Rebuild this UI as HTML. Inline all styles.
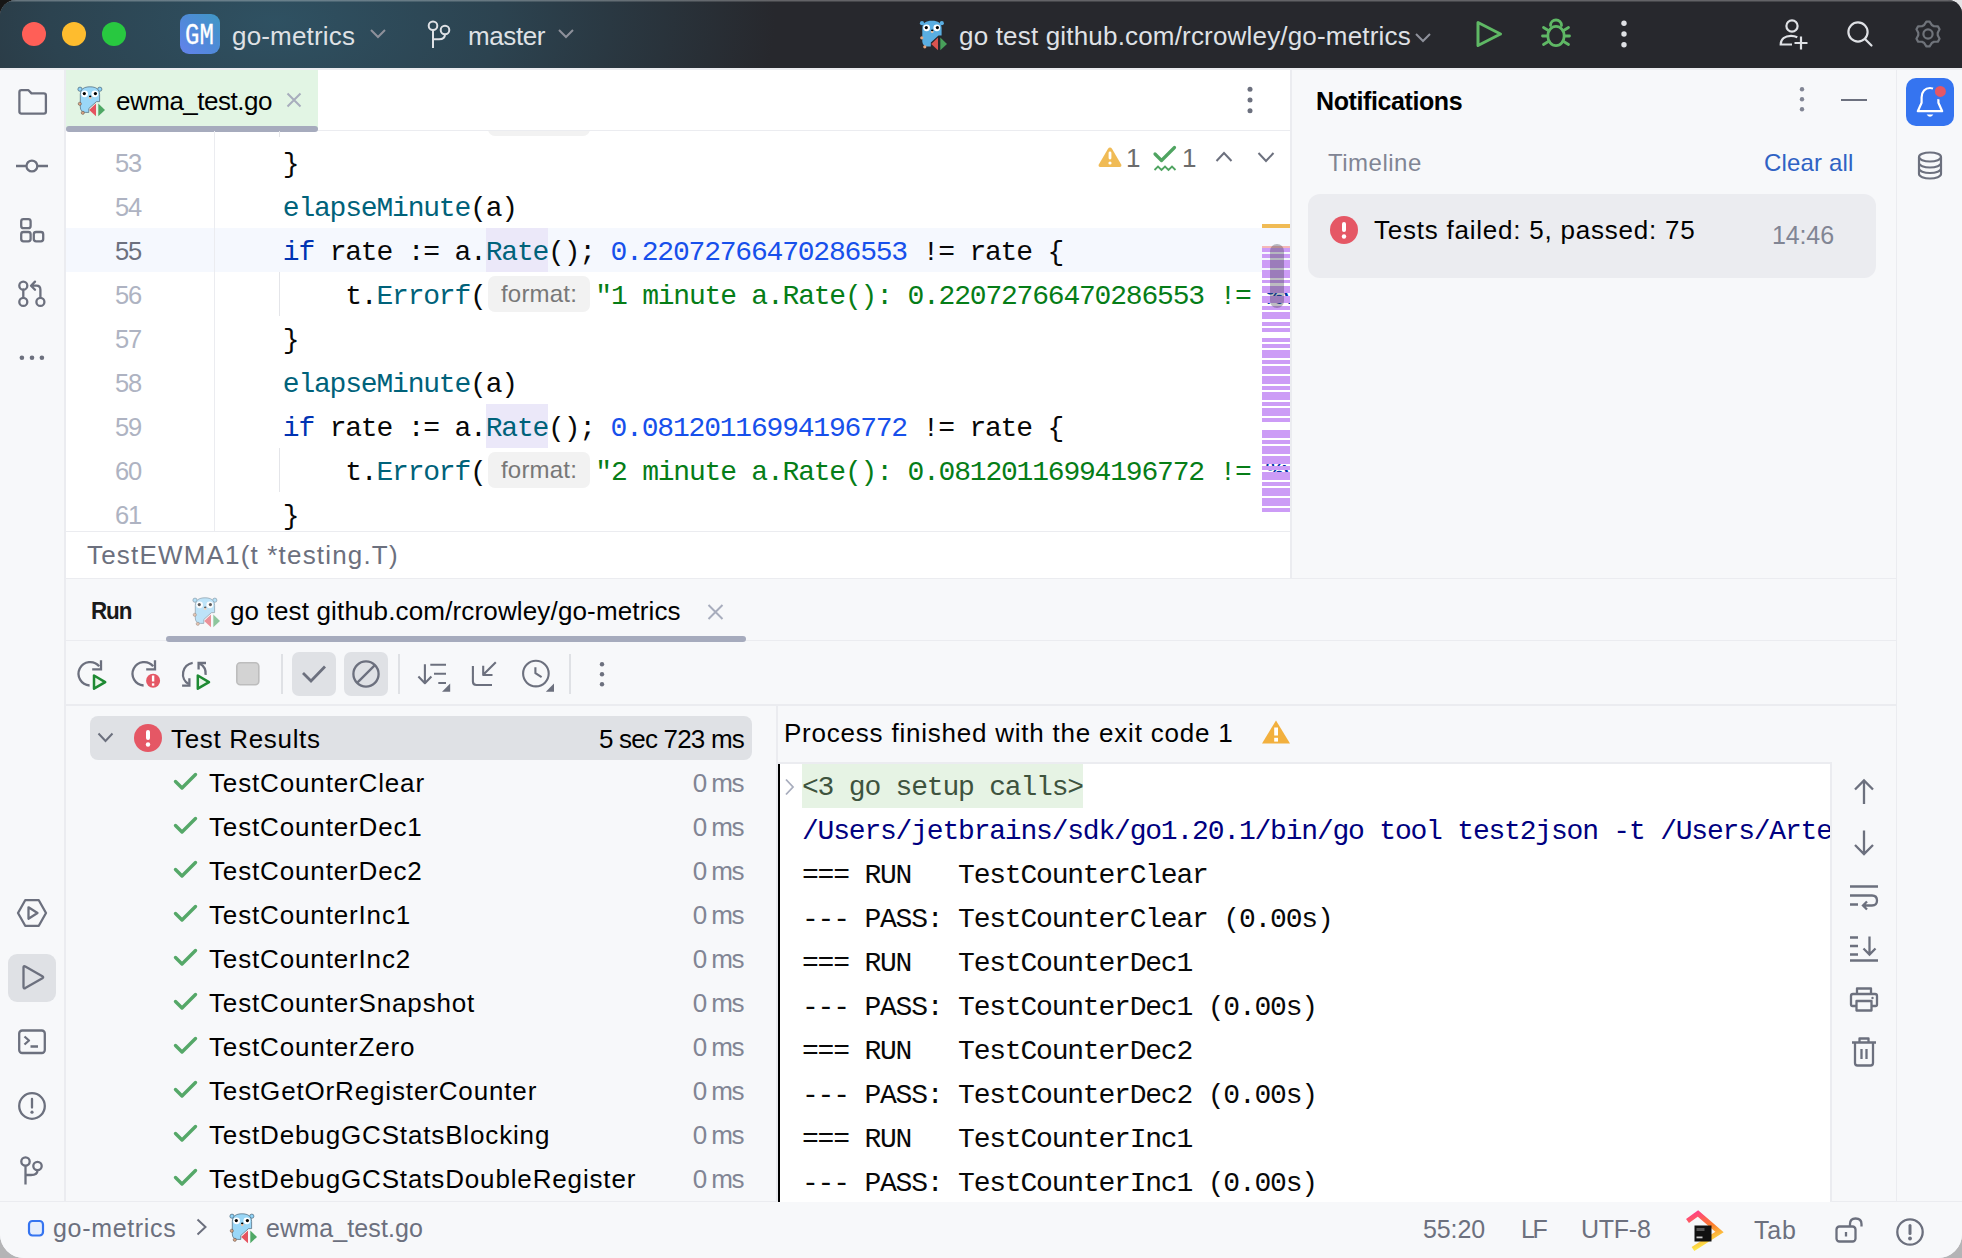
<!DOCTYPE html><html><head><meta charset="utf-8"><style>
*{margin:0;padding:0;box-sizing:border-box}
html,body{width:1962px;height:1258px;overflow:hidden;background:#d0d0d2}
body{font-family:"Liberation Sans",sans-serif;position:relative}
.abs{position:absolute}
.ui{position:absolute;font-family:"Liberation Sans",sans-serif;font-size:26px;letter-spacing:0.7px;white-space:pre;line-height:40px}
.mono{font-family:"Liberation Mono",monospace;font-size:26px;white-space:pre}
#win{position:absolute;left:0;top:0;width:1962px;height:1258px;border-radius:16px 14px 24px 24px;overflow:hidden;background:#f7f8fa}
#title{position:absolute;left:0;top:0;width:1962px;height:68px;
 background:radial-gradient(ellipse 500px 250px at 275px 22px, #2f5162 0%, #2c4350 45%, #27282d 100%), #27282d;box-shadow:inset 0 1.5px 0 rgba(255,255,255,0.28)}
.tl{position:absolute;top:22px;width:24px;height:24px;border-radius:50%}
.wht{color:#dfe1e5}
svg{position:absolute;overflow:visible}
.ln{position:absolute;width:75px;text-align:right;font-family:"Liberation Sans",sans-serif;font-size:25.5px;letter-spacing:-1.2px;color:#aeb3c2;line-height:44px}
.code{position:absolute;font-family:"Liberation Mono",monospace;font-size:28px;letter-spacing:-1.2px;white-space:pre;color:#080808;height:44px;line-height:44px}
.fn{color:#00627a}.kw{color:#0033b3}.num{color:#1750eb}.str{color:#067d17}
.hint{display:inline-block;text-indent:0;background:#f2f2f2;color:#787878;font-family:"Liberation Sans",sans-serif;font-size:24px;border-radius:7px;height:36px;line-height:36px;vertical-align:top;margin:1px 5.6px 0 2.7px;width:101.4px;text-align:center;letter-spacing:0.2px}
.con{position:absolute;font-family:"Liberation Mono",monospace;font-size:28px;letter-spacing:-1.2px;white-space:pre;color:#080808;line-height:44px}
</style></head><body>
<div class="abs" style="left:0;top:0;width:40px;height:40px;background:#161616"></div>
<div class="abs" style="left:1922px;top:0;width:40px;height:40px;background:#e4e4e6"></div>
<div class="abs" style="left:0;top:1218px;width:40px;height:40px;background:#b4b4b6"></div>
<div class="abs" style="left:1922px;top:1218px;width:40px;height:40px;background:#b4b4b6"></div>
<div id="win">
<div id="title">
 <div class="tl" style="left:22px;background:#ff5f57"></div>
 <div class="tl" style="left:62px;background:#febc2e"></div>
 <div class="tl" style="left:102px;background:#28c840"></div>

 <svg width="0" height="0" style="position:absolute">
  <defs>
   <symbol id="gopher" viewBox="0 0 30 32">
    <circle cx="3" cy="4.2" r="2.1" fill="#8ed3f8" stroke="#4d6577" stroke-width="0.7"/>
    <circle cx="22.8" cy="4.2" r="2.1" fill="#8ed3f8" stroke="#4d6577" stroke-width="0.7"/>
    <path d="M3.3 9.5 C3.3 4.2 7 1.8 13 1.8 C19 1.8 22.6 4.2 22.6 9.5 L22.6 16.6 L19.5 16.6 L11.8 23.5 L11.8 27.4 L8.2 27.4 C5 27.4 3.3 25 3.3 22 Z" fill="#9ad7f7" stroke="#4d6577" stroke-width="0.7"/>
    <circle cx="2.8" cy="18.8" r="1.6" fill="#d9a585" stroke="#5a4a40" stroke-width="0.5"/>
    <circle cx="5.8" cy="27.8" r="1.6" fill="#d9a585" stroke="#5a4a40" stroke-width="0.5"/>
    <circle cx="7.6" cy="8.8" r="3.4" fill="#fff"/>
    <circle cx="17.8" cy="8.8" r="3.4" fill="#fff"/>
    <circle cx="7.3" cy="8.6" r="1.6" fill="#000"/>
    <circle cx="18.4" cy="8.6" r="1.6" fill="#000"/>
    <ellipse cx="13.2" cy="12.8" rx="1.5" ry="1.1" fill="#f2c4a4"/>
    <ellipse cx="13.2" cy="11.4" rx="1.2" ry="0.8" fill="#000"/>
    <path d="M12.2 24.9 L19 18.4 L19 31.2 Z" fill="#e5535f"/>
    <path d="M21.3 18.4 L28 24.9 L21.3 31.2 Z" fill="#4fa865"/>
   </symbol>
   <symbol id="gopherD" viewBox="0 0 30 32">
    <circle cx="3" cy="4.2" r="2.1" fill="#5aaee2"/>
    <circle cx="22.8" cy="4.2" r="2.1" fill="#5aaee2"/>
    <path d="M3.3 9.5 C3.3 4.2 7 1.8 13 1.8 C19 1.8 22.6 4.2 22.6 9.5 L22.6 16.6 L19.5 16.6 L11.8 23.5 L11.8 27.4 L8.2 27.4 C5 27.4 3.3 25 3.3 22 Z" fill="#5aaee2"/>
    <circle cx="2.8" cy="18.8" r="1.6" fill="#e3a47e"/>
    <circle cx="5.8" cy="27.8" r="1.6" fill="#e3a47e"/>
    <circle cx="7.6" cy="8.8" r="3.4" fill="#fff"/>
    <circle cx="17.8" cy="8.8" r="3.4" fill="#fff"/>
    <circle cx="7.3" cy="8.6" r="1.6" fill="#000"/>
    <circle cx="18.4" cy="8.6" r="1.6" fill="#000"/>
    <ellipse cx="13.2" cy="12.8" rx="1.5" ry="1.1" fill="#f2c4a4"/>
    <ellipse cx="13.2" cy="11.4" rx="1.2" ry="0.8" fill="#000"/>
    <path d="M12.2 24.9 L19 18.4 L19 31.2 Z" fill="#d9534f"/>
    <path d="M21.3 18.4 L28 24.9 L21.3 31.2 Z" fill="#48a05a"/>
   </symbol>
  </defs>
 </svg>

<div class="abs" style="left:180px;top:14px;width:40px;height:40px;background:linear-gradient(45deg,#6482ec 0%,#4f8ad8 50%,#3f98c4 100%);border-radius:9px"></div>
<div class="abs mono" style="left:185px;top:16px;width:40px;height:40px;line-height:40px;color:#fff;font-size:30px;transform:scaleX(0.8);transform-origin:0 0;letter-spacing:0px;-webkit-text-stroke:0.3px #fff">GM</div>
<div class="ui" style="left:232px;top:16px;color:#dfe1e5;letter-spacing:0.18px;">go-metrics</div>
<svg style="left:370px;top:29px" width="16" height="10"><path d="M1 1 L8.0 8 L15 1" stroke="#8e919b" stroke-width="2" fill="none"/></svg>
<svg style="left:426px;top:19px" width="28" height="32"><circle cx="7" cy="6.7" r="4.3" stroke="#dfe1e5" stroke-width="2" fill="none"/><circle cx="19" cy="11" r="4.3" stroke="#dfe1e5" stroke-width="2" fill="none"/><path d="M7 11 L7 29 M7 20.3 L13 20.3 Q19 20.3 19 15.3" stroke="#dfe1e5" stroke-width="2" fill="none"/></svg>
<div class="ui" style="left:468px;top:16px;color:#dfe1e5;letter-spacing:-0.4px;">master</div>
<svg style="left:558px;top:29px" width="16" height="10"><path d="M1 1 L8.0 8 L15 1" stroke="#8e919b" stroke-width="2" fill="none"/></svg>
<svg style="left:919px;top:19px" width="30" height="32"><use href="#gopherD"/></svg>
<div class="ui" style="left:959px;top:16px;color:#dfe1e5;letter-spacing:0.18px;">go test github.com/rcrowley/go-metrics</div>
<svg style="left:1415px;top:33px" width="16" height="10"><path d="M1 1 L8.0 8 L15 1" stroke="#8e919b" stroke-width="2" fill="none"/></svg>
<svg style="left:1474px;top:19px" width="30" height="30"><path d="M4 3.5 L26.5 15 L4 26.5 Z" stroke="#5fb865" stroke-width="3" fill="none" stroke-linejoin="round"/></svg>
<svg style="left:1538px;top:16px" width="36" height="36"><g stroke="#5fb865" stroke-width="2.8" fill="none" stroke-linecap="round"><path d="M12.5 9.5 A5.5 5.5 0 0 1 23.5 9.5"/><ellipse cx="18" cy="20" rx="8.2" ry="9.6"/><path d="M4.5 20 L9.8 20 M26.2 20 L31.5 20 M5.5 11.5 L10.8 14.8 M30.5 11.5 L25.2 14.8 M5.5 28.5 L10.8 25.2 M30.5 28.5 L25.2 25.2"/></g></svg>
<svg style="left:1614px;top:18px" width="20" height="34"><circle cx="10" cy="5.3" r="2.7" fill="#dfe1e5"/><circle cx="10" cy="16.0" r="2.7" fill="#dfe1e5"/><circle cx="10" cy="26.7" r="2.7" fill="#dfe1e5"/></svg>
<svg style="left:1776px;top:16px" width="32" height="36"><g stroke="#dfe1e5" stroke-width="2.2" fill="none"><circle cx="16" cy="10" r="5.6"/><path d="M16 28.5 L4.7 28.5 C4.7 23 9 19.8 15 19.8 C17.5 19.8 19.5 20.3 21.3 21.2"/><path d="M25 20.5 L25 33.5 M18.5 27 L31.5 27"/></g></svg>
<svg style="left:1844px;top:18px" width="30" height="30"><g stroke="#dfe1e5" stroke-width="2.2" fill="none" stroke-linecap="round"><circle cx="14" cy="14" r="9.6"/><path d="M21 21 L27.5 27.5"/></g></svg>
<svg style="left:1914px;top:20px" width="28" height="28"><g stroke="#6f737a" stroke-width="2.2" fill="none" stroke-linejoin="round"><path d="M12.37 1.61 L15.63 1.61 L17.75 4.95 L19.97 6.23 L23.92 6.39 L25.55 9.22 L23.72 12.72 L23.72 15.28 L25.55 18.78 L23.92 21.61 L19.97 21.77 L17.75 23.05 L15.63 26.39 L12.37 26.39 L10.25 23.05 L8.03 21.77 L4.08 21.61 L2.45 18.78 L4.28 15.28 L4.28 12.72 L2.45 9.22 L4.08 6.39 L8.03 6.23 L10.25 4.95Z"/><circle cx="14" cy="14" r="4.6"/></g></svg>
</div>
<div class="abs" style="left:0px;top:68px;width:1962px;height:2px;background:#ebecf0;"></div>
<div class="abs" style="left:0px;top:70px;width:64px;height:1132px;background:#f7f8fa;"></div>
<div class="abs" style="left:64px;top:70px;width:2px;height:1132px;background:#ebecf0;"></div>
<div class="abs" style="left:66px;top:70px;width:1224px;height:461px;background:#fff;"></div>
<div class="abs" style="left:1290px;top:70px;width:2px;height:509px;background:#ebecf0;"></div>
<div class="abs" style="left:66px;top:70px;width:252px;height:61px;background:#e2f5e4;"></div>
<div class="abs" style="left:66px;top:130px;width:1224px;height:1px;background:#ebecf0;"></div>
<div class="abs" style="left:66px;top:126px;width:252px;height:6px;background:#a6abbd;border-radius:3px"></div>
<svg style="left:77px;top:85px" width="30" height="32"><use href="#gopher"/></svg>
<div class="ui" style="left:116px;top:81px;color:#000;letter-spacing:-0.5px;">ewma_test.go</div>
<svg style="left:286px;top:92px" width="16" height="16"><path d="M1.5 1.5 L14.5 14.5 M14.5 1.5 L1.5 14.5" stroke="#a8adbd" stroke-width="2" fill="none"/></svg>
<svg style="left:1240px;top:84px" width="20" height="34"><circle cx="10" cy="5.3" r="2.5" fill="#6c707e"/><circle cx="10" cy="16.0" r="2.5" fill="#6c707e"/><circle cx="10" cy="26.7" r="2.5" fill="#6c707e"/></svg>
<div class="abs" style="left:66px;top:228px;width:1224px;height:44px;background:#f5f8fe;"></div>
<div class="abs" style="left:485.6px;top:228px;width:62.4px;height:44px;background:#ebe8f9;"></div>
<div class="abs" style="left:485.6px;top:404px;width:62.4px;height:44px;background:#ebe8f9;"></div>
<div class="abs" style="left:214px;top:131px;width:1px;height:400px;background:#ebecf0;"></div>
<div class="abs" style="left:279px;top:131px;width:1px;height:6px;background:#e4e5e9;"></div>
<div class="abs" style="left:279px;top:272px;width:1px;height:44px;background:#e4e5e9;"></div>
<div class="abs" style="left:279px;top:448px;width:1px;height:44px;background:#e4e5e9;"></div>
<div class="abs" style="left:488px;top:106px;width:102px;height:30px;background:#f2f2f2;border-radius:7px;clip-path:inset(25px 0 0 0)"></div>
<div class="abs" style="left:66px;top:131px;width:1224px;height:400px;overflow:hidden">
<div class="ln" style="left:0;top:10px;color:#aeb3c2">53</div>
<div class="code" style="left:154.4px;top:12px">    }</div>
<div class="ln" style="left:0;top:54px;color:#aeb3c2">54</div>
<div class="code" style="left:154.4px;top:56px">    <span class="fn">elapseMinute</span>(a)</div>
<div class="ln" style="left:0;top:98px;color:#6c707e">55</div>
<div class="code" style="left:154.4px;top:100px">    <span class="kw">if</span> rate := a.<span class="fn">Rate</span>(); <span class="num">0.22072766470286553</span> != rate {</div>
<div class="ln" style="left:0;top:142px;color:#aeb3c2">56</div>
<div class="code" style="left:154.4px;top:144px">        t.<span class="fn">Errorf</span>(<span class="hint">format:</span><span class="str">"1 minute a.Rate(): 0.22072766470286553 != <span style="color:#0037a6">%v</span>", rate)</span></div>
<div class="ln" style="left:0;top:186px;color:#aeb3c2">57</div>
<div class="code" style="left:154.4px;top:188px">    }</div>
<div class="ln" style="left:0;top:230px;color:#aeb3c2">58</div>
<div class="code" style="left:154.4px;top:232px">    <span class="fn">elapseMinute</span>(a)</div>
<div class="ln" style="left:0;top:274px;color:#aeb3c2">59</div>
<div class="code" style="left:154.4px;top:276px">    <span class="kw">if</span> rate := a.<span class="fn">Rate</span>(); <span class="num">0.08120116994196772</span> != rate {</div>
<div class="ln" style="left:0;top:318px;color:#aeb3c2">60</div>
<div class="code" style="left:154.4px;top:320px">        t.<span class="fn">Errorf</span>(<span class="hint">format:</span><span class="str">"2 minute a.Rate(): 0.08120116994196772 != <span style="color:#0037a6">%v</span>", rate)</span></div>
<div class="ln" style="left:0;top:362px;color:#aeb3c2">61</div>
<div class="code" style="left:154.4px;top:364px">    }</div>
</div>
<div class="abs" style="left:1262px;top:224px;width:28px;height:4px;background:#f0bb55;"></div>
<div class="abs" style="left:1262px;top:246px;width:28px;height:2px;background:#f5b8b8;"></div>
<div class="abs" style="left:1262px;top:248px;width:28px;height:3.6px;background:#cc9cf6;"></div>
<div class="abs" style="left:1262px;top:254px;width:28px;height:4px;background:#cc9cf6;"></div>
<div class="abs" style="left:1262px;top:260px;width:28px;height:8px;background:#cc9cf6;"></div>
<div class="abs" style="left:1262px;top:270px;width:28px;height:8px;background:#cc9cf6;"></div>
<div class="abs" style="left:1262px;top:280px;width:28px;height:3px;background:#cc9cf6;"></div>
<div class="abs" style="left:1262px;top:285.6px;width:28px;height:7.9px;background:#cc9cf6;"></div>
<div class="abs" style="left:1262px;top:295.7px;width:28px;height:7.8px;background:#cc9cf6;"></div>
<div class="abs" style="left:1262px;top:306px;width:28px;height:3.5px;background:#cc9cf6;"></div>
<div class="abs" style="left:1262px;top:311.7px;width:28px;height:7.8px;background:#cc9cf6;"></div>
<div class="abs" style="left:1262px;top:322px;width:28px;height:3.7px;background:#cc9cf6;"></div>
<div class="abs" style="left:1262px;top:328px;width:28px;height:3.8px;background:#cc9cf6;"></div>
<div class="abs" style="left:1262px;top:338px;width:28px;height:3.8px;background:#cc9cf6;"></div>
<div class="abs" style="left:1262px;top:344px;width:28px;height:4px;background:#cc9cf6;"></div>
<div class="abs" style="left:1262px;top:350px;width:28px;height:8px;background:#cc9cf6;"></div>
<div class="abs" style="left:1262px;top:360px;width:28px;height:4px;background:#cc9cf6;"></div>
<div class="abs" style="left:1262px;top:366px;width:28px;height:8px;background:#cc9cf6;"></div>
<div class="abs" style="left:1262px;top:376px;width:28px;height:8px;background:#cc9cf6;"></div>
<div class="abs" style="left:1262px;top:386px;width:28px;height:3.7px;background:#cc9cf6;"></div>
<div class="abs" style="left:1262px;top:392px;width:28px;height:8px;background:#cc9cf6;"></div>
<div class="abs" style="left:1262px;top:402px;width:28px;height:4px;background:#cc9cf6;"></div>
<div class="abs" style="left:1262px;top:408px;width:28px;height:8px;background:#cc9cf6;"></div>
<div class="abs" style="left:1262px;top:418px;width:28px;height:4px;background:#cc9cf6;"></div>
<div class="abs" style="left:1262px;top:430px;width:28px;height:7.8px;background:#cc9cf6;"></div>
<div class="abs" style="left:1262px;top:440px;width:28px;height:3.8px;background:#cc9cf6;"></div>
<div class="abs" style="left:1262px;top:446px;width:28px;height:7.8px;background:#cc9cf6;"></div>
<div class="abs" style="left:1262px;top:456px;width:28px;height:7.8px;background:#cc9cf6;"></div>
<div class="abs" style="left:1262px;top:466px;width:28px;height:4px;background:#cc9cf6;"></div>
<div class="abs" style="left:1262px;top:472px;width:28px;height:8px;background:#cc9cf6;"></div>
<div class="abs" style="left:1262px;top:482px;width:28px;height:4px;background:#cc9cf6;"></div>
<div class="abs" style="left:1262px;top:488px;width:28px;height:8px;background:#cc9cf6;"></div>
<div class="abs" style="left:1262px;top:498px;width:28px;height:8px;background:#cc9cf6;"></div>
<div class="abs" style="left:1262px;top:508px;width:28px;height:4px;background:#cc9cf6;"></div>
<div class="abs" style="left:1270px;top:244px;width:14px;height:64px;background:rgba(70,70,80,0.36);border-radius:7px"></div>
<svg style="left:1097px;top:145px" width="26" height="24"><path d="M13 2.5 Q14.2 2.5 15 3.8 L24.2 19.5 Q25 21.5 22.8 22 L3.2 22 Q1 21.5 1.8 19.5 L11 3.8 Q11.8 2.5 13 2.5Z" fill="#f0bb55"/><rect x="11.6" y="6.5" width="2.8" height="8" rx="1.4" fill="#fff"/><circle cx="13" cy="18" r="1.6" fill="#fff"/></svg>
<div class="ui" style="left:1126px;top:138px;color:#6c6c6c;letter-spacing:0px;">1</div>
<svg style="left:1152px;top:145px" width="28" height="30"><path d="M3 9 L9.5 15.5 L22.5 2.5" stroke="#4fa461" stroke-width="3.2" fill="none" stroke-linecap="round" stroke-linejoin="round"/><path d="M2.5 25 L6 21.5 L9.5 25 L13 21.5 L16.5 25 L20 21.5 L23.5 25" stroke="#4fa461" stroke-width="1.8" fill="none"/></svg>
<div class="ui" style="left:1182px;top:138px;color:#6c6c6c;letter-spacing:0px;">1</div>
<svg style="left:1215px;top:151px" width="18" height="12"><path d="M1.5 10 L9 2 L16.5 10" stroke="#6c707e" stroke-width="2" fill="none"/></svg>
<svg style="left:1257px;top:151px" width="18" height="12"><path d="M1.5 2 L9 10 L16.5 2" stroke="#6c707e" stroke-width="2" fill="none"/></svg>
<div class="abs" style="left:66px;top:531px;width:1224px;height:1px;background:#ebecf0;"></div>
<div class="abs" style="left:66px;top:532px;width:1224px;height:46px;background:#fff;"></div>
<div class="ui" style="left:87px;top:535px;color:#6c707e;letter-spacing:1.18px;">TestEWMA1(t *testing.T)</div>
<div class="abs" style="left:1292px;top:70px;width:604px;height:509px;background:#f7f8fa;"></div>
<div class="ui" style="left:1316px;top:81px;color:#000;letter-spacing:-0.4px;font-size:25px;font-weight:bold">Notifications</div>
<svg style="left:1792px;top:84px" width="20" height="34"><circle cx="10" cy="5.3" r="2.2" fill="#818594"/><circle cx="10" cy="15.3" r="2.2" fill="#818594"/><circle cx="10" cy="25.3" r="2.2" fill="#818594"/></svg>
<div class="abs" style="left:1841px;top:99px;width:26px;height:2px;background:#6c707e;"></div>
<div class="ui" style="left:1328px;top:143px;color:#818594;letter-spacing:0.49px;font-size:24px;">Timeline</div>
<div class="ui" style="left:1764px;top:143px;color:#2f62c4;letter-spacing:0.16px;font-size:24px;">Clear all</div>
<div class="abs" style="left:1308px;top:194px;width:568px;height:84px;background:#ebecf0;border-radius:12px"></div>
<svg style="left:1330px;top:216px" width="28" height="28"><circle cx="14" cy="14" r="14" fill="#e55765"/><rect x="12" y="6" width="4" height="10" rx="2" fill="#fff"/><circle cx="14" cy="20.5" r="2.2" fill="#fff"/></svg>
<div class="ui" style="left:1374px;top:210px;color:#000;letter-spacing:0.77px;">Tests failed: 5, passed: 75</div>
<div class="ui" style="left:1772px;top:215px;color:#818594;letter-spacing:-0.13px;font-size:25px;">14:46</div>
<div class="abs" style="left:1896px;top:70px;width:1px;height:1132px;background:#ebecf0;"></div>
<div class="abs" style="left:1897px;top:70px;width:65px;height:1132px;background:#f7f8fa;"></div>
<div class="abs" style="left:1906px;top:78px;width:48px;height:48px;background:#3574f0;border-radius:10px"></div>
<svg style="left:1906px;top:78px" width="48" height="48"><path d="M11.8 33.2 L15.6 24.8 L15.6 19.5 C15.6 13.6 19.2 10 24 10 C28.8 10 32.4 13.6 32.4 19.5 L32.4 24.8 L36.2 33.2 Z" stroke="#fff" stroke-width="2.2" fill="none" stroke-linejoin="round"/><path d="M20.6 36.6 L27.4 36.6 Q24 41 20.6 36.6Z" fill="#fff"/><circle cx="34.4" cy="13.4" r="6.8" fill="#e55765" stroke="#3574f0" stroke-width="2.6"/></svg>
<svg style="left:1917px;top:151px" width="26" height="30"><g stroke="#6c707e" stroke-width="2.2" fill="none"><ellipse cx="13" cy="6" rx="11" ry="4.5"/><path d="M2 6 L2 23 C2 25.5 7 27.5 13 27.5 C19 27.5 24 25.5 24 23 L24 6 M2 12 C2 14.5 7 16.5 13 16.5 C19 16.5 24 14.5 24 12 M2 17.5 C2 20 7 22 13 22 C19 22 24 20 24 17.5"/></g></svg>
<div class="abs" style="left:66px;top:578px;width:1830px;height:1px;background:#ebecf0;"></div>
<div class="abs" style="left:66px;top:579px;width:1830px;height:623px;background:#f7f8fa;"></div>
<div class="abs" style="left:0px;top:1201px;width:1962px;height:1px;background:#ebecf0;"></div>
<div class="abs" style="left:0px;top:1202px;width:1962px;height:56px;background:#f7f8fa;"></div>
<svg style="left:16px;top:88px" width="32" height="28"><path d="M3.4 4.2 Q3.4 2.2 5.4 2.2 L12.5 2.2 L15.5 5.4 L27.8 5.4 Q29.9 5.4 29.9 7.4 L29.9 23.7 Q29.9 25.6 27.9 25.6 L5.4 25.6 Q3.4 25.6 3.4 23.6 Z" stroke="#6c707e" stroke-width="2.3" fill="none" stroke-linejoin="round"/></svg>
<svg style="left:15px;top:158px" width="34" height="16"><path d="M1 8 L11 8 M22 8 L33 8" stroke="#6c707e" stroke-width="2.3"/><circle cx="16.9" cy="8" r="5.4" stroke="#6c707e" stroke-width="2.3" fill="none"/></svg>
<svg style="left:18px;top:216px" width="28" height="28"><g stroke="#6c707e" stroke-width="2.3" fill="none"><rect x="3.2" y="3.2" width="9.4" height="9" rx="2.3"/><rect x="3.2" y="16" width="9.4" height="9.4" rx="2.3"/><rect x="15.8" y="16" width="9.4" height="9.4" rx="2.3"/></g></svg>
<svg style="left:15px;top:278px" width="34" height="30"><g stroke="#6c707e" stroke-width="2.3" fill="none"><circle cx="8.3" cy="7.7" r="4"/><circle cx="8.3" cy="23.9" r="4"/><circle cx="25.4" cy="23.9" r="4"/><path d="M8.3 11.7 L8.3 19.9 M25.4 19.9 L25.4 11.7 Q25.4 7.7 21.4 7.7 L16.3 7.7 M20 3.6 L16 7.7 L20 11.7" stroke-linejoin="round" stroke-linecap="round"/></g></svg>
<svg style="left:15px;top:350px" width="34" height="16"><circle cx="6.9" cy="7.8" r="2.3" fill="#6c707e"/><circle cx="17" cy="7.8" r="2.3" fill="#6c707e"/><circle cx="26.9" cy="7.8" r="2.3" fill="#6c707e"/></svg>
<svg style="left:16px;top:897px" width="32" height="32"><g stroke="#6c707e" stroke-width="2.3" fill="none" stroke-linejoin="round"><path d="M9.2 3.2 L22.8 3.2 L30 16 L22.8 28.8 L9.2 28.8 L2 16 Z"/><path d="M12.5 10.3 L21.5 16 L12.5 21.7 Z"/></g></svg>
<div class="abs" style="left:8px;top:954px;width:48px;height:48px;background:#dfe1e5;border-radius:9px"></div>
<svg style="left:16px;top:962px" width="32" height="32"><path d="M7.5 5.5 Q7.5 3.6 9.3 4.5 L26.4 14.3 Q28 15.3 26.4 16.3 L9.3 26.1 Q7.5 27 7.5 25.1 Z" stroke="#6c707e" stroke-width="2.3" fill="none" stroke-linejoin="round"/></svg>
<svg style="left:16px;top:1027px" width="32" height="30"><g stroke="#6c707e" stroke-width="2.3" fill="none" stroke-linejoin="round"><rect x="3.2" y="3.5" width="25.6" height="22.5" rx="3"/><path d="M8.5 9.5 L13 13.5 L8.5 17.5 M14.5 19.5 L22 19.5"/></g></svg>
<svg style="left:16px;top:1090px" width="32" height="32"><g stroke="#6c707e" stroke-width="2.3" fill="none"><circle cx="16" cy="16" r="12.8"/><path d="M16 9 L16 17.5" stroke-linecap="round"/></g><circle cx="16" cy="22.2" r="1.6" fill="#6c707e"/></svg>
<svg style="left:16px;top:1155px" width="32" height="32"><g stroke="#6c707e" stroke-width="2.3" fill="none"><circle cx="9.5" cy="6.5" r="4.2"/><circle cx="21.5" cy="11" r="4.2"/><path d="M9.5 10.7 L9.5 29.5 M9.5 20 L15 20 Q21.5 20 21.5 15.2"/></g></svg>
<div class="ui" style="left:91px;top:591px;color:#1a1a1a;letter-spacing:-1.2px;font-size:24.4px;font-weight:bold;transform:scaleX(0.92);transform-origin:0 0">Run</div>
<svg style="left:192px;top:596px" width="30" height="32"><g opacity="0.62"><use href="#gopher"/></g></svg>
<div class="ui" style="left:230px;top:591px;color:#000;letter-spacing:0.15px;">go test github.com/rcrowley/go-metrics</div>
<svg style="left:707px;top:604px" width="18" height="16"><path d="M1.5 1 L15.5 15 M15.5 1 L1.5 15" stroke="#a8adbd" stroke-width="2" fill="none"/></svg>
<div class="abs" style="left:66px;top:640px;width:1830px;height:1px;background:#ebecf0;"></div>
<div class="abs" style="left:166px;top:636px;width:580px;height:6px;background:#a6abbd;border-radius:3px"></div>
<svg style="left:72px;top:654px" width="144" height="44"><g fill="none" stroke-width="2.3" stroke="#6c707e">
<path d="M99.2 666.3 A11.7 11.7 0 1 0 89.6 685.5" transform="translate(-72,-654)"/>
<path d="M101 660.2 L101 669.4 L92.2 669.4" transform="translate(-72,-654)"/>
<path d="M153.2 666.3 A11.7 11.7 0 1 0 143.6 685.5" transform="translate(-72,-654)"/>
<path d="M155 660.2 L155 669.4 L146.2 669.4" transform="translate(-72,-654)"/>
<path d="M192.7 662.8 A11.5 11.5 0 0 0 188.7 684.1" transform="translate(-72,-654)"/>
<path d="M189.4 678.2 L189.4 685.6 L182.1 685.6" transform="translate(-72,-654)"/>
<path d="M205.6 674.9 A11.5 11.5 0 0 0 199.5 663.6" transform="translate(-72,-654)"/>
<path d="M198.6 669.5 L198.6 663 L206 663" transform="translate(-72,-654)"/>
</g>
<g transform="translate(-72,-654)" stroke="#1e8a33" stroke-width="2.5" fill="#eaf6ea" stroke-linejoin="round">
<path d="M94 675.5 L94 688.7 L105.2 682.1 Z"/>
<path d="M197.8 675.5 L197.8 688.7 L209 682.1 Z"/>
</g>
<g transform="translate(-72,-654)"><circle cx="153.1" cy="680.8" r="7" fill="#e55765"/><rect x="151.9" y="675.5" width="2.4" height="6" fill="#fff"/><rect x="151.9" y="683.3" width="2.4" height="2.4" fill="#fff"/></g></svg>
<svg style="left:235px;top:661px" width="26" height="26"><rect x="1.8" y="1.8" width="22" height="22" rx="3.5" fill="#d3d3d3" stroke="#bdbdbd" stroke-width="1.6"/></svg>
<div class="abs" style="left:281px;top:654px;width:1.5px;height:40px;background:#dfe1e5;"></div>
<div class="abs" style="left:292px;top:652px;width:44px;height:44px;background:#dfe1e5;border-radius:7px"></div>
<svg style="left:300px;top:662px" width="28" height="24"><path d="M3 11 L11 19 L25 4.5" stroke="#6c707e" stroke-width="2.8" fill="none"/></svg>
<div class="abs" style="left:344px;top:652px;width:44px;height:44px;background:#dfe1e5;border-radius:7px"></div>
<svg style="left:352px;top:660px" width="28" height="28"><g stroke="#6c707e" stroke-width="2.3" fill="none"><circle cx="14" cy="14" r="12.6"/><path d="M22.9 5.1 L5.1 22.9"/></g></svg>
<div class="abs" style="left:398px;top:654px;width:1.5px;height:40px;background:#dfe1e5;"></div>
<svg style="left:405px;top:650px" width="160" height="50"><g transform="translate(-405,-650)"><g stroke="#6c707e" stroke-width="2.1" fill="none" stroke-linejoin="round" stroke-linecap="butt">
<path d="M424.9 664.2 L424.9 683 M418.4 676.6 L424.9 683.2 L431.4 676.6 M430.3 664.8 L446 664.8 M434 673.8 L446 673.8 M438.3 683 L446 683"/>
<path d="M472.9 666 L472.9 681.5 Q472.9 685 476.4 685 L492 685 M495.8 662.2 L483.2 674.8 M483.2 665.8 L483.2 675 L492.5 675"/>
<circle cx="535.9" cy="673.6" r="12.8"/>
<path d="M535.4 667.3 L535.4 673.2 L541.6 677.2"/>
</g>
<path d="M442 691.8 L450.2 691.8 L450.2 683.6 Z" fill="#6c707e"/>
<path d="M545.8 691.8 L554 691.8 L554 683.6 Z" fill="#6c707e"/>
</g></svg>
<div class="abs" style="left:569px;top:654px;width:1.5px;height:40px;background:#dfe1e5;"></div>
<svg style="left:592px;top:658.7px" width="20" height="34"><circle cx="10" cy="5.3" r="2.2" fill="#6c707e"/><circle cx="10" cy="15.3" r="2.2" fill="#6c707e"/><circle cx="10" cy="25.3" r="2.2" fill="#6c707e"/></svg>
<div class="abs" style="left:66px;top:704px;width:1830px;height:2px;background:#ebecf0;"></div>
<div class="abs" style="left:776px;top:706px;width:2px;height:496px;background:#ebecf0;"></div>
<div class="abs" style="left:90px;top:716px;width:662px;height:44px;background:#dfe1e5;border-radius:8px"></div>
<svg style="left:97px;top:732px" width="18" height="12"><path d="M1.5 1.5 L8.5 9 L15.5 1.5" stroke="#6c707e" stroke-width="2" fill="none"/></svg>
<svg style="left:134px;top:724px" width="28" height="28"><circle cx="14" cy="14" r="14" fill="#e55765"/><rect x="12" y="6" width="4" height="10" rx="2" fill="#fff"/><circle cx="14" cy="20.5" r="2.2" fill="#fff"/></svg>
<div class="ui" style="left:171px;top:719px;color:#000;letter-spacing:0.67px;">Test Results</div>
<div class="ui" style="left:544px;top:719px;color:#000;letter-spacing:-0.8px;width:200px;text-align:right;">5 sec 723 ms</div>
<div class="abs" style="left:66px;top:707px;width:710px;height:495px;overflow:hidden">
<svg style="left:107px;top:64px" width="26" height="22"><path d="M2.5 10.5 L9 17 L22.5 3.5" stroke="#55a868" stroke-width="3.4" fill="none" stroke-linecap="round" stroke-linejoin="round"/></svg>
<div class="ui" style="left:143px;top:56px;color:#000;letter-spacing:0.85px">TestCounterClear</div>
<div class="ui" style="left:577px;top:56px;color:#818594;letter-spacing:-1.5px;width:100px;text-align:right">0 ms</div>
<svg style="left:107px;top:108px" width="26" height="22"><path d="M2.5 10.5 L9 17 L22.5 3.5" stroke="#55a868" stroke-width="3.4" fill="none" stroke-linecap="round" stroke-linejoin="round"/></svg>
<div class="ui" style="left:143px;top:100px;color:#000;letter-spacing:0.85px">TestCounterDec1</div>
<div class="ui" style="left:577px;top:100px;color:#818594;letter-spacing:-1.5px;width:100px;text-align:right">0 ms</div>
<svg style="left:107px;top:152px" width="26" height="22"><path d="M2.5 10.5 L9 17 L22.5 3.5" stroke="#55a868" stroke-width="3.4" fill="none" stroke-linecap="round" stroke-linejoin="round"/></svg>
<div class="ui" style="left:143px;top:144px;color:#000;letter-spacing:0.85px">TestCounterDec2</div>
<div class="ui" style="left:577px;top:144px;color:#818594;letter-spacing:-1.5px;width:100px;text-align:right">0 ms</div>
<svg style="left:107px;top:196px" width="26" height="22"><path d="M2.5 10.5 L9 17 L22.5 3.5" stroke="#55a868" stroke-width="3.4" fill="none" stroke-linecap="round" stroke-linejoin="round"/></svg>
<div class="ui" style="left:143px;top:188px;color:#000;letter-spacing:0.85px">TestCounterInc1</div>
<div class="ui" style="left:577px;top:188px;color:#818594;letter-spacing:-1.5px;width:100px;text-align:right">0 ms</div>
<svg style="left:107px;top:240px" width="26" height="22"><path d="M2.5 10.5 L9 17 L22.5 3.5" stroke="#55a868" stroke-width="3.4" fill="none" stroke-linecap="round" stroke-linejoin="round"/></svg>
<div class="ui" style="left:143px;top:232px;color:#000;letter-spacing:0.85px">TestCounterInc2</div>
<div class="ui" style="left:577px;top:232px;color:#818594;letter-spacing:-1.5px;width:100px;text-align:right">0 ms</div>
<svg style="left:107px;top:284px" width="26" height="22"><path d="M2.5 10.5 L9 17 L22.5 3.5" stroke="#55a868" stroke-width="3.4" fill="none" stroke-linecap="round" stroke-linejoin="round"/></svg>
<div class="ui" style="left:143px;top:276px;color:#000;letter-spacing:0.85px">TestCounterSnapshot</div>
<div class="ui" style="left:577px;top:276px;color:#818594;letter-spacing:-1.5px;width:100px;text-align:right">0 ms</div>
<svg style="left:107px;top:328px" width="26" height="22"><path d="M2.5 10.5 L9 17 L22.5 3.5" stroke="#55a868" stroke-width="3.4" fill="none" stroke-linecap="round" stroke-linejoin="round"/></svg>
<div class="ui" style="left:143px;top:320px;color:#000;letter-spacing:0.85px">TestCounterZero</div>
<div class="ui" style="left:577px;top:320px;color:#818594;letter-spacing:-1.5px;width:100px;text-align:right">0 ms</div>
<svg style="left:107px;top:372px" width="26" height="22"><path d="M2.5 10.5 L9 17 L22.5 3.5" stroke="#55a868" stroke-width="3.4" fill="none" stroke-linecap="round" stroke-linejoin="round"/></svg>
<div class="ui" style="left:143px;top:364px;color:#000;letter-spacing:0.85px">TestGetOrRegisterCounter</div>
<div class="ui" style="left:577px;top:364px;color:#818594;letter-spacing:-1.5px;width:100px;text-align:right">0 ms</div>
<svg style="left:107px;top:416px" width="26" height="22"><path d="M2.5 10.5 L9 17 L22.5 3.5" stroke="#55a868" stroke-width="3.4" fill="none" stroke-linecap="round" stroke-linejoin="round"/></svg>
<div class="ui" style="left:143px;top:408px;color:#000;letter-spacing:0.85px">TestDebugGCStatsBlocking</div>
<div class="ui" style="left:577px;top:408px;color:#818594;letter-spacing:-1.5px;width:100px;text-align:right">0 ms</div>
<svg style="left:107px;top:460px" width="26" height="22"><path d="M2.5 10.5 L9 17 L22.5 3.5" stroke="#55a868" stroke-width="3.4" fill="none" stroke-linecap="round" stroke-linejoin="round"/></svg>
<div class="ui" style="left:143px;top:452px;color:#000;letter-spacing:0.85px">TestDebugGCStatsDoubleRegister</div>
<div class="ui" style="left:577px;top:452px;color:#818594;letter-spacing:-1.5px;width:100px;text-align:right">0 ms</div>
</div>
<div class="ui" style="left:784px;top:713px;color:#000;letter-spacing:0.78px;">Process finished with the exit code 1</div>
<svg style="left:1262px;top:720px" width="28" height="24"><path d="M14 0.5 L28 23.5 L0 23.5 Z" fill="#f2b03e"/><rect x="12.2" y="7.5" width="3.8" height="8" fill="#fff"/><rect x="12.2" y="17.8" width="3.8" height="3.8" fill="#fff"/></svg>
<div class="abs" style="left:778px;top:762px;width:1054px;height:2px;background:#ebecf0;"></div>
<div class="abs" style="left:778px;top:764px;width:1052px;height:438px;background:#fff;"></div>
<div class="abs" style="left:1830px;top:764px;width:2px;height:438px;background:#ebecf0;"></div>
<div class="abs" style="left:778px;top:764px;width:2px;height:438px;background:#000;"></div>
<svg style="left:784px;top:778px" width="12" height="18"><path d="M2 1.5 L9 9 L2 16.5" stroke="#a8adbd" stroke-width="1.8" fill="none"/></svg>
<div class="abs" style="left:802px;top:764px;width:281px;height:44px;background:#e6f3e4;"></div>
<div class="abs" style="left:780px;top:764px;width:1050px;height:438px;overflow:hidden">
<div class="con" style="left:22px;top:2px"><span style="color:#3e533e">&lt;3 go setup calls&gt;</span></div>
<div class="con" style="left:22px;top:46px"><span style="color:#000080">/Users/jetbrains/sdk/go1.20.1/bin/go tool test2json -t /Users/Arte</span></div>
<div class="con" style="left:22px;top:90px">=== RUN   TestCounterClear</div>
<div class="con" style="left:22px;top:134px">--- PASS: TestCounterClear (0.00s)</div>
<div class="con" style="left:22px;top:178px">=== RUN   TestCounterDec1</div>
<div class="con" style="left:22px;top:222px">--- PASS: TestCounterDec1 (0.00s)</div>
<div class="con" style="left:22px;top:266px">=== RUN   TestCounterDec2</div>
<div class="con" style="left:22px;top:310px">--- PASS: TestCounterDec2 (0.00s)</div>
<div class="con" style="left:22px;top:354px">=== RUN   TestCounterInc1</div>
<div class="con" style="left:22px;top:398px">--- PASS: TestCounterInc1 (0.00s)</div>
</div>
<svg style="left:1852px;top:778px" width="24" height="28"><path d="M12 2.5 L12 26 M3 11.5 L12 2.5 L21 11.5" stroke="#6c707e" stroke-width="2.3" fill="none"/></svg>
<svg style="left:1852px;top:829px" width="24" height="28"><path d="M12 1.5 L12 25 M3 16 L12 25 L21 16" stroke="#6c707e" stroke-width="2.3" fill="none"/></svg>
<svg style="left:1848px;top:883px" width="32" height="30"><g stroke="#6c707e" stroke-width="2.3" fill="none"><path d="M2 3.5 L30 3.5 M2 12.5 L24 12.5 Q29 12.5 29 17.5 Q29 22.5 24 22.5 L15 22.5 M19 18.5 L15 22.5 L19 26.5 M2 21.5 L10 21.5"/></g></svg>
<svg style="left:1848px;top:934px" width="32" height="28"><g stroke="#6c707e" stroke-width="2.3" fill="none"><path d="M2 3.5 L10 3.5 M2 12 L10 12 M2 20.5 L10 20.5 M2 26.5 L30 26.5 M21.5 2.5 L21.5 20.5 M15.5 14.5 L21.5 20.5 L27.5 14.5"/></g></svg>
<svg style="left:1849px;top:986px" width="30" height="28"><g stroke="#6c707e" stroke-width="2.3" fill="none" stroke-linejoin="round"><path d="M8 8 L8 2.5 L22 2.5 L22 8"/><path d="M7 20 L3.5 20 Q2 20 2 18.5 L2 10 Q2 8 4 8 L26 8 Q28 8 28 10 L28 18.5 Q28 20 26.5 20 L23 20"/><rect x="7.5" y="15" width="15" height="9.5"/></g><circle cx="23.5" cy="12" r="1.2" fill="#6c707e"/></svg>
<svg style="left:1850px;top:1036px" width="28" height="32"><g stroke="#6c707e" stroke-width="2.3" fill="none" stroke-linejoin="round"><path d="M2 6.5 L26 6.5 M9.5 6.5 L9.5 2.5 L18.5 2.5 L18.5 6.5 M5 6.5 L5 27 Q5 29.5 7.5 29.5 L20.5 29.5 Q23 29.5 23 27 L23 6.5 M11.5 13 L11.5 23 M16.5 13 L16.5 23"/></g></svg>
<svg style="left:27px;top:1219px" width="18" height="18"><rect x="2" y="2" width="14" height="14.5" rx="3.5" fill="#e6eefc" stroke="#3574f0" stroke-width="2.2"/></svg>
<div class="ui" style="left:53px;top:1208px;color:#6c707e;letter-spacing:0.67px;font-size:25px;">go-metrics</div>
<svg style="left:195px;top:1218px" width="14" height="18"><path d="M2.5 1.5 L10.5 9 L2.5 16.5" stroke="#6c707e" stroke-width="2" fill="none"/></svg>
<svg style="left:229px;top:1212px" width="30" height="32"><use href="#gopher"/></svg>
<div class="ui" style="left:266px;top:1208px;color:#6c707e;letter-spacing:0.12px;font-size:25px;">ewma_test.go</div>
<div class="ui" style="left:1423px;top:1209px;color:#6c707e;letter-spacing:-0.1px;font-size:25px;">55:20</div>
<div class="ui" style="left:1521px;top:1209px;color:#6c707e;letter-spacing:-2.5px;font-size:25px;">LF</div>
<div class="ui" style="left:1581px;top:1209px;color:#6c707e;letter-spacing:-0.25px;font-size:25px;">UTF-8</div>
<svg style="left:1684px;top:1210px" width="40" height="42"><defs><linearGradient id="jbg" x1="0" y1="0" x2="0.3" y2="1"><stop offset="0" stop-color="#ff3d8b"/><stop offset="0.5" stop-color="#fc7d2c"/><stop offset="1" stop-color="#fde84a"/></linearGradient></defs><path d="M3.5 11 L14 3.5 L35.5 22 L9 39" stroke="url(#jbg)" stroke-width="5" fill="none" stroke-linejoin="miter"/><rect x="10.5" y="15.5" width="17" height="16" fill="#111"/><rect x="12.5" y="18" width="8" height="3" fill="#555"/><rect x="12.5" y="26.5" width="6" height="1.8" fill="#ccc"/></svg>
<div class="ui" style="left:1754px;top:1210px;color:#6c707e;letter-spacing:0.75px;font-size:25px;">Tab</div>
<svg style="left:1834px;top:1216px" width="32" height="28"><g stroke="#6c707e" stroke-width="2.3" fill="none"><rect x="2.5" y="10.5" width="19" height="15" rx="3"/><path d="M16 10.5 L16 8 Q16 2.5 21.5 2.5 Q27.5 2.5 27.5 8 L27.5 10.5" /><path d="M12 16 L12 20.5"/></g></svg>
<svg style="left:1895px;top:1217px" width="30" height="30"><g stroke="#6c707e" stroke-width="2.3" fill="none"><circle cx="15" cy="15" r="12.7"/><path d="M15 8.5 L15 16.5" stroke-linecap="round" stroke-width="3"/></g><circle cx="15" cy="21.5" r="1.9" fill="#6c707e"/></svg>
</div></body></html>
